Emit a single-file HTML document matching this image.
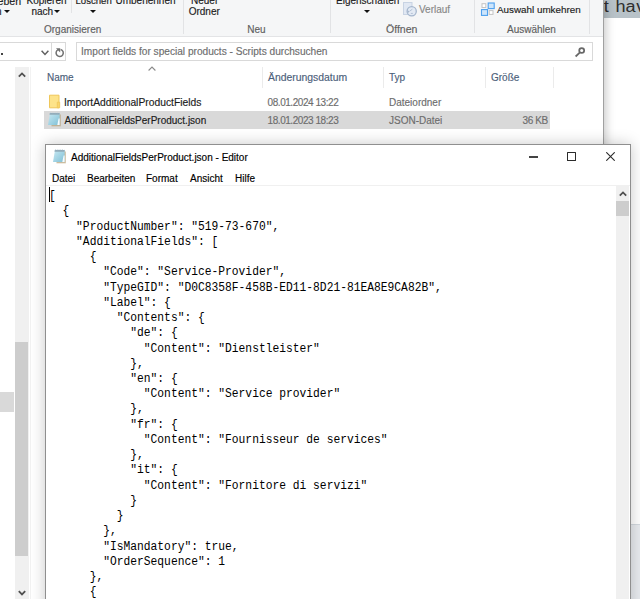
<!DOCTYPE html>
<html><head><meta charset="utf-8">
<style>
*{margin:0;padding:0;box-sizing:border-box}
html,body{width:640px;height:599px;overflow:hidden;background:#fff;position:relative;font-family:"Liberation Sans",sans-serif}
.a{position:absolute;white-space:nowrap}
.s{font-size:10px;line-height:12px;-webkit-text-stroke:0.15px currentColor}
.k{color:#1b1b1b}
#ribbon{left:0;top:0;width:603px;height:37px;background:#f5f6f7;border-bottom:1px solid #e3e4e6}
.sep{position:absolute;width:1px;background:#e2e3e5}
.hsep{position:absolute;width:1px;background:#ebebeb}
.tri{position:absolute;width:0;height:0;border-left:3px solid transparent;border-right:3px solid transparent;border-top:3.4px solid #111;margin:-0.3px 0 0 -0.6px}
.grp{color:#606060}
.hdr{color:#4c607a}
.gray{color:#6d6d6d}
#np{left:45px;top:144px;width:586px;height:470px;background:#fff;border:1px solid #8f8f8f;box-shadow:0 0 14px rgba(0,0,0,0.22)}
.mono{font-family:"Liberation Mono",monospace;font-size:12.5px;line-height:15.23px;color:#000;white-space:pre;transform-origin:0 0;transform:scaleX(0.9027)}
</style></head><body>
<svg width="0" height="0" style="position:absolute">
<defs>
<linearGradient id="npg" x1="0" y1="0" x2="1" y2="1"><stop offset="0" stop-color="#c9e9f3"/><stop offset="1" stop-color="#7fc0d6"/></linearGradient>
<symbol id="npicon" viewBox="0 0 18 18">
<path d="M6.5 4.5h9.3v11.8h-9.3z" fill="#b59f76" opacity="0.7"/>
<path d="M5 3h9.6v12h-11.6z" fill="url(#npg)"/>
<path d="M13.6 8.5L14.6 8.5L14.6 15L12.3 15z" fill="#f6fbfd"/>
<path d="M4.8 3h9.8v1.8h-10.1z" fill="#92abb9"/>
<path d="M5.2 2.6h9" stroke="#c8d6de" stroke-width="1" stroke-dasharray="1 1.2"/>
</symbol>
</defs>
</svg>
<!-- web page behind right -->
<div class="a" style="left:603px;top:0;width:37px;height:18px;background:#b8c2c8"></div>
<div class="a" style="left:603px;top:524px;width:37px;height:75px;background:#e8ebef;border-top:1px solid #d3d9df"></div>
<div class="a" style="left:0;top:0;font-size:16px;line-height:20px;color:#2e2e2e;transform:scaleX(1.13);transform-origin:0 0">
<span class="a" style="left:534.4px;top:-2.8px">t</span><span class="a" style="left:544.8px;top:-2.8px">h</span><span class="a" style="left:553.5px;top:-2.8px">a</span><span class="a" style="left:563px;top:-2.8px">v</span></div>

<!-- explorer window -->
<div class="a" style="left:0;top:0;width:603px;height:599px;background:#fff;box-shadow:3px 0 9px rgba(0,0,0,0.22)"></div>
<div class="a" id="ribbon"></div>
<div class="a" style="left:603px;top:0;width:1px;height:599px;background:#a0a0a0"></div>

<!-- ribbon contents -->
<div class="a s k" style="left:-2.5px;top:-5.5px;font-size:10.6px">eben</div>
<div class="a s k" style="left:-4px;top:5.5px">n</div>
<div class="tri" style="left:5px;top:10px"></div>
<div class="a s k" style="left:26.5px;top:-5.5px">Kopieren</div>
<div class="a s k" style="left:31.5px;top:5.5px">nach</div>
<div class="tri" style="left:55px;top:10px"></div>
<div class="sep" style="left:71px;top:0;height:13px"></div>
<div class="a s k" style="left:75.5px;top:-5.5px;font-size:9.6px">Löschen</div>
<div class="tri" style="left:91px;top:10px"></div>
<div class="a s k" style="left:115.5px;top:-5.5px">Umbenennen</div>
<div class="a s grp" style="left:44px;top:23.5px">Organisieren</div>
<div class="sep" style="left:183px;top:0;height:34px"></div>
<div class="a s k" style="left:191px;top:-5.5px">Neuer</div>
<div class="a s k" style="left:188.7px;top:5.5px">Ordner</div>
<div class="a s grp" style="left:247.3px;top:23.5px">Neu</div>
<div class="sep" style="left:330px;top:0;height:33px"></div>
<div class="a s k" style="left:336px;top:-5.5px">Eigenschaften</div>
<div class="tri" style="left:364.5px;top:10px"></div>
<!-- verlauf icon -->
<svg class="a" style="left:402px;top:1px" width="16" height="16" viewBox="0 0 16 16">
<rect x="1.5" y="1.5" width="8.5" height="12" fill="#e1e8f3" stroke="#c8d3e3"/>
<circle cx="9.7" cy="10.3" r="4.6" fill="#e3eaf4" stroke="#a5b6cd" stroke-width="1.3"/>
<path d="M7.6 10.2l2.8-2M8.8 12.4h2" stroke="#b3c2d6" stroke-width="1"/>
<path d="M5 9.6l1.2 2.4 1.3-2z" fill="#a5b6cd"/>
</svg>
<div class="a s" style="left:419px;top:3.5px;color:#888">Verlauf</div>
<div class="a s grp" style="left:386px;top:23px;font-size:10.5px">Öffnen</div>
<div class="sep" style="left:474px;top:0;height:33px"></div>
<svg class="a" style="left:478px;top:0px" width="20" height="20" viewBox="0 0 20 20">
<rect x="4" y="3.7" width="3.8" height="3.8" fill="#fff" stroke="#c4c4c4"/>
<rect x="10.2" y="3" width="6" height="5.6" fill="#cde5fc" stroke="#4ea0ee" stroke-width="1.1"/>
<rect x="3.5" y="9.6" width="6" height="5.8" fill="#cde5fc" stroke="#4ea0ee" stroke-width="1.1"/>
<rect x="11.2" y="10.6" width="3.8" height="3.8" fill="#fff" stroke="#c4c4c4"/>
</svg>
<div class="a s k" style="left:497px;top:3.8px;font-size:9.85px">Auswahl umkehren</div>
<div class="a s grp" style="left:507px;top:23.5px">Auswählen</div>
<div class="sep" style="left:589px;top:0;height:34px"></div>

<!-- address bar -->
<div class="a" style="left:-5px;top:42px;width:71px;height:19px;border:1px solid #d9d9d9"></div>
<div class="a" style="left:51px;top:43px;width:1px;height:17px;background:#d9d9d9"></div>
<div class="a" style="left:1px;top:53px;width:2px;height:2px;background:#444"></div>
<svg class="a" style="left:41px;top:50px" width="8" height="6" viewBox="0 0 8 6"><path d="M0.6 0.8l3.4 3.6 3.4-3.6" stroke="#606060" stroke-width="1.5" fill="none"/></svg>
<svg class="a" style="left:54px;top:47px" width="11" height="11" viewBox="0 0 11 11"><path d="M4.2 2.6A3.6 3.6 0 1 0 6.6 2.4" stroke="#707070" stroke-width="1.5" fill="none"/><path d="M2 1.2h4.2v4.2z" fill="#707070"/></svg>
<div class="a" style="left:76px;top:42px;width:517px;height:19px;border:1px solid #d9d9d9"></div>
<div class="a s" style="left:81px;top:45.8px;color:#6d6d6d;font-size:10.15px">Import fields for special products - Scripts durchsuchen</div>
<svg class="a" style="left:574px;top:46px" width="12" height="12" viewBox="0 0 12 12"><circle cx="7.7" cy="4.5" r="2.45" stroke="#686868" stroke-width="1.75" fill="none"/><path d="M6 6.3L1.6 10.5" stroke="#686868" stroke-width="1.75"/></svg>

<!-- nav pane scrollbar -->
<div class="a" style="left:15px;top:67px;width:14px;height:532px;background:#f0f0f0"></div>
<div class="a" style="left:15px;top:342px;width:13px;height:214px;background:#cdcdcd"></div>
<div class="a" style="left:30px;top:67px;width:1px;height:532px;background:#f2f2f2"></div>
<svg class="a" style="left:18px;top:72px" width="8" height="6" viewBox="0 0 8 6"><path d="M0.8 4.6l3.2-3.2 3.2 3.2" stroke="#505050" stroke-width="1.8" fill="none"/></svg>
<svg class="a" style="left:18px;top:590px" width="8" height="6" viewBox="0 0 8 6"><path d="M0.8 1.2l3.2 3.2 3.2-3.2" stroke="#505050" stroke-width="1.8" fill="none"/></svg>
<div class="a" style="left:0;top:392px;width:14px;height:20px;background:#d9d9d9"></div>

<!-- file list header -->
<div class="a s hdr" style="left:47px;top:72px">Name</div>
<svg class="a" style="left:148px;top:66px" width="8" height="6" viewBox="0 0 8 6"><path d="M0.6 4.5l3.4-3.4 3.4 3.4" stroke="#8a8a8a" stroke-width="1.1" fill="none"/></svg>
<div class="hsep" style="left:262px;top:67px;height:21px"></div>
<div class="a s hdr" style="left:268px;top:72px;font-size:10.4px">Änderungsdatum</div>
<div class="hsep" style="left:383px;top:67px;height:21px"></div>
<div class="a s hdr" style="left:389px;top:72px">Typ</div>
<div class="hsep" style="left:485px;top:67px;height:21px"></div>
<div class="a s hdr" style="left:491px;top:72px">Größe</div>
<div class="hsep" style="left:553px;top:67px;height:21px"></div>

<!-- rows -->
<svg class="a" style="left:48px;top:94px" width="13" height="15" viewBox="0 0 13 15">
<path d="M1.5 1.2h9.5v12.6h-9.5z" fill="#fde38a" stroke="#efc75a"/>
<path d="M9.3 8.2h2.4v5.6h-2.4z" fill="#f9d56b" stroke="#efc75a" stroke-width="0.8"/>
</svg>
<div class="a s k" style="left:64px;top:97px;font-size:10.3px">ImportAdditionalProductFields</div>
<div class="a s gray" style="left:267.6px;top:97px;letter-spacing:-0.45px">08.01.2024 13:22</div>
<div class="a s gray" style="left:389px;top:97px">Dateiordner</div>

<div class="a" style="left:44px;top:111px;width:506px;height:18px;background:#d9d9d9"></div>
<svg class="a" style="left:45px;top:109.6px" width="18" height="18"><use href="#npicon"/></svg>
<div class="a s k" style="left:64.5px;top:115px">AdditionalFieldsPerProduct.json</div>
<div class="a s gray" style="left:267.6px;top:115px;letter-spacing:-0.45px">18.01.2023 18:23</div>
<div class="a s gray" style="left:389px;top:115px">JSON-Datei</div>
<div class="a s gray" style="left:522.5px;top:115px;letter-spacing:-0.4px">36 KB</div>

<!-- notepad -->
<div class="a" id="np"></div>
<svg class="a" style="left:50px;top:147px" width="18" height="18"><use href="#npicon"/></svg>
<div class="a s" style="left:71px;top:152px;color:#000">AdditionalFieldsPerProduct.json - Editor</div>
<div class="a" style="left:529px;top:156px;width:9px;height:1.6px;background:#444"></div>
<div class="a" style="left:567px;top:152px;width:9px;height:9px;border:1.2px solid #2b2b2b;border-radius:0.5px"></div>
<svg class="a" style="left:605.8px;top:152px" width="9" height="9" viewBox="0 0 9 9"><path d="M0.3 0.3l8.4 8.4M8.7 0.3l-8.4 8.4" stroke="#2b2b2b" stroke-width="1.1"/></svg>
<div class="a s" style="left:52px;top:172.8px;color:#000">Datei</div>
<div class="a s" style="left:87px;top:172.8px;color:#000">Bearbeiten</div>
<div class="a s" style="left:146px;top:172.8px;color:#000">Format</div>
<div class="a s" style="left:190px;top:172.8px;color:#000">Ansicht</div>
<div class="a s" style="left:235px;top:172.8px;color:#000">Hilfe</div>
<div class="a" style="left:46px;top:185px;width:584px;height:1px;background:#f0f0f0"></div>
<!-- scrollbar -->
<div class="a" style="left:616px;top:186px;width:13px;height:413px;background:#f0f0f0"></div>
<div class="a" style="left:616px;top:201px;width:13px;height:15px;background:#cdcdcd"></div>
<svg class="a" style="left:619px;top:191px" width="8" height="6" viewBox="0 0 8 6"><path d="M0.8 4.6l3.2-3.2 3.2 3.2" stroke="#505050" stroke-width="1.8" fill="none"/></svg>
<div class="a" style="left:49px;top:187px;width:1px;height:15px;background:#000"></div>
<div class="a mono" style="left:49.2px;top:189.2px">[
  {
    "ProductNumber": "519-73-670",
    "AdditionalFields": [
      {
        "Code": "Service-Provider",
        "TypeGID": "D0C8358F-458B-ED11-8D21-81EA8E9CA82B",
        "Label": {
          "Contents": {
            "de": {
              "Content": "Dienstleister"
            },
            "en": {
              "Content": "Service provider"
            },
            "fr": {
              "Content": "Fournisseur de services"
            },
            "it": {
              "Content": "Fornitore di servizi"
            }
          }
        },
        "IsMandatory": true,
        "OrderSequence": 1
      },
      {</div>
</body></html>
